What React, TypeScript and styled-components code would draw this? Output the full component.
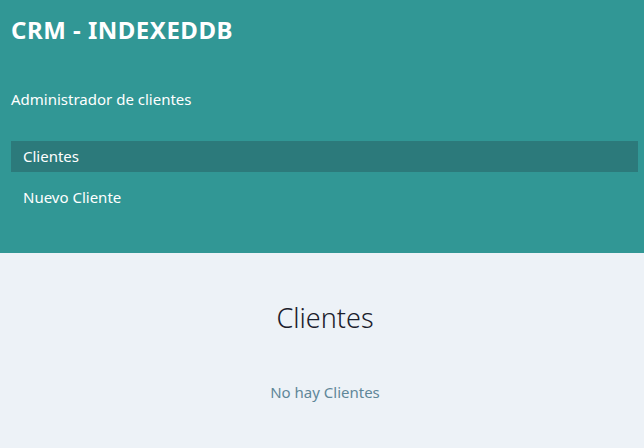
import styled, { createGlobalStyle } from 'styled-components';

const GlobalStyle = createGlobalStyle`
  html, body {
    margin: 0;
    padding: 0;
    background: #edf2f7;
    font-family: "Segoe UI", "Noto Sans", "Open Sans", sans-serif;
  }
`;

const Layout = styled.div`
  display: flex;
  flex-direction: column;
  min-height: 448px;
`;

const Sidebar = styled.aside`
  background: #319795;
  padding: 11px 6px 40px 11px;
`;

const Title = styled.h1`
  margin: 0;
  padding-top: 4px;
  color: #fff;
  font-size: 24px;
  font-weight: 700;
  letter-spacing: 0.5px;
  line-height: 30px;
`;

const Subtitle = styled.p`
  margin: 44px 0 0;
  color: #fff;
  font-size: 15px;
  line-height: 20px;
`;

const Nav = styled.nav`
  display: flex;
  flex-direction: column;
  gap: 10px;
  margin-top: 32px;
`;

const NavLink = styled.a<{ $active?: boolean }>`
  display: block;
  padding: 0 12px;
  height: 31px;
  line-height: 31px;
  color: #fff;
  font-size: 15px;
  text-decoration: none;
  background: ${(p) => (p.$active ? '#2c7a7b' : 'transparent')};
`;

const Main = styled.main`
  flex: 1;
  padding: 47px 17px 20px 23px;
  text-align: center;
`;

const Heading = styled.h2`
  margin: 0;
  color: #1a202c;
  font-size: 27px;
  font-weight: 300;
  line-height: 36px;
`;

const Empty = styled.p`
  margin: 46px 0 0;
  color: #5f8799;
  font-size: 15px;
  line-height: 20px;
`;

export default function App() {
  return (
    <Layout>
      <GlobalStyle />
      <Sidebar>
        <Title>CRM - INDEXEDDB</Title>
        <Subtitle>Administrador de clientes</Subtitle>
        <Nav>
          <NavLink href="#" $active>
            Clientes
          </NavLink>
          <NavLink href="#">Nuevo Cliente</NavLink>
        </Nav>
      </Sidebar>
      <Main>
        <Heading>Clientes</Heading>
        <Empty>No hay Clientes</Empty>
      </Main>
    </Layout>
  );
}
